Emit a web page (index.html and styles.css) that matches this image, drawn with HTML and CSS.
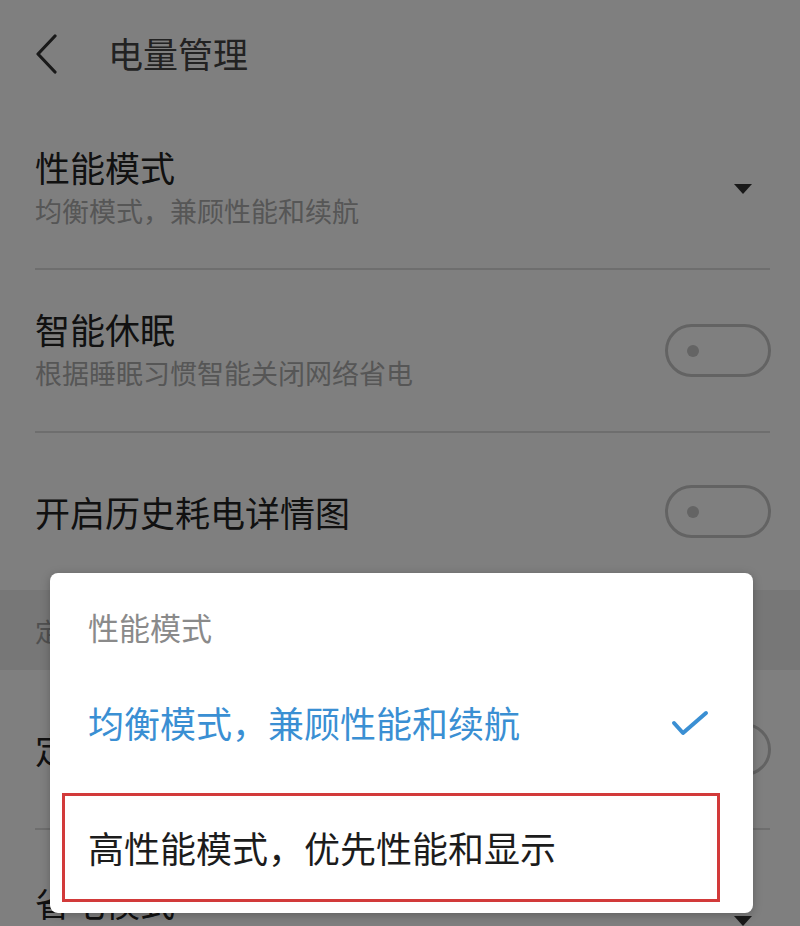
FILE: index.html
```html
<!DOCTYPE html>
<html lang="zh-CN">
<head>
<meta charset="utf-8">
<title>电量管理</title>
<link rel="stylesheet" href="styles.css">
</head>
<body>
<div class="page">
  <div class="header">
    <svg class="back" width="24" height="40" viewBox="0 0 24 40"><polyline points="20,2 3,20 20,38" fill="none" stroke="#333" stroke-width="3.2" stroke-linecap="round" stroke-linejoin="round"/></svg>
    <div class="h-title">电量管理</div>
  </div>
  <div class="list">
    <div class="row row1">
      <div class="txt">
        <div class="t">性能模式</div>
        <div class="s">均衡模式，兼顾性能和续航</div>
      </div>
      <span class="tri"></span>
    </div>
    <div class="row row2">
      <div class="txt">
        <div class="t">智能休眠</div>
        <div class="s">根据睡眠习惯智能关闭网络省电</div>
      </div>
      <span class="toggle"><span class="dot"></span></span>
    </div>
    <div class="row row3 nob">
      <div class="txt">
        <div class="t">开启历史耗电详情图</div>
      </div>
      <span class="toggle"><span class="dot"></span></span>
    </div>
  </div>
  <div class="section">定时设置</div>
  <div class="list">
    <div class="row row4">
      <div class="txt">
        <div class="t">定时开关机</div>
      </div>
      <span class="toggle"><span class="dot"></span></span>
    </div>
    <div class="row row5 nob">
      <div class="txt">
        <div class="t">省电模式</div>
      </div>
      <span class="tri tri5"></span>
    </div>
  </div>
</div>
<div class="overlay"></div>
<div class="dialog">
  <div class="d-title">性能模式</div>
  <div class="opt opt-sel">
    <span>均衡模式，兼顾性能和续航</span>
    <svg class="check" width="38" height="28" viewBox="0 0 38 28"><polyline points="3,13 12,23 35,3" fill="none" stroke="#3a8fd3" stroke-width="4" stroke-linecap="round" stroke-linejoin="round"/></svg>
  </div>
  <div class="opt opt-hl">
    <span>高性能模式，优先性能和显示</span>
  </div>
</div>
</body>
</html>
```

FILE: styles.css
```css
html, body {
  margin: 0;
  padding: 0;
}
body {
  width: 800px;
  height: 926px;
  overflow: hidden;
  position: relative;
  background: #fff;
  font-family: "Noto Sans CJK SC", "Noto Sans", sans-serif;
  color: #333;
}
.page {
  background: #fff;
}
.header {
  height: 105px;
  display: flex;
  align-items: center;
  padding-left: 35px;
}
.back {
  display: block;
  margin-top: 2px;
}
.h-title {
  margin-left: 49px;
  font-size: 35px;
  line-height: 40px;
  color: #444;
}
.list {
  padding: 0 30px 0 35px;
}
.row {
  display: flex;
  align-items: center;
  justify-content: space-between;
  border-bottom: 2px solid #ddd;
  box-sizing: border-box;
}
.row.nob {
  border-bottom: none;
}
.row1 { height: 165px; padding-top: 4px; }
.row2 { height: 163px; }
.row3 { height: 157px; }
.row4 { height: 160px; }
.row5 { height: 120px; align-items: flex-start; padding-top: 50px; }
.t {
  font-size: 35px;
  line-height: 44px;
  color: #222;
}
.s {
  font-size: 27px;
  line-height: 44px;
  color: #acacac;
}
.tri {
  width: 0;
  height: 0;
  border-left: 9px solid transparent;
  border-right: 9px solid transparent;
  border-top: 10px solid #333;
  margin-right: 18px;
}
.tri5 {
  margin-top: 36px;
}
.toggle {
  width: 106px;
  height: 53px;
  box-sizing: border-box;
  border: 3px solid #c6c6c6;
  border-radius: 27px;
  display: flex;
  align-items: center;
  padding-left: 19px;
  margin-right: -1px;
}
.dot {
  width: 12px;
  height: 12px;
  border-radius: 50%;
  background: #c8c8c8;
}
.section {
  height: 80px;
  background: #eeeeee;
  display: flex;
  align-items: center;
  padding-left: 35px;
  font-size: 26px;
  color: #a0a0a0;
}
.overlay {
  position: absolute;
  inset: 0;
  background: rgba(0, 0, 0, 0.5);
}
.dialog {
  position: absolute;
  left: 50px;
  top: 573px;
  width: 703px;
  height: 340px;
  background: #fff;
  border-radius: 8px;
  box-shadow: 0 2px 10px rgba(0, 0, 0, 0.25);
  box-sizing: border-box;
  padding-top: 36px;
}
.d-title {
  padding-left: 38px;
  font-size: 31px;
  line-height: 36px;
  color: #8a8a8a;
  margin-bottom: 22px;
}
.opt {
  display: flex;
  align-items: center;
  justify-content: space-between;
  font-size: 36px;
  box-sizing: border-box;
}
.opt-sel {
  height: 110px;
  padding: 0 44px 0 38px;
  color: #3a8fd3;
  margin-bottom: 16px;
}
.check {
  display: block;
  margin-top: 4px;
}
.opt-hl {
  height: 109px;
  margin: 0 33px 0 12px;
  border: 3px solid #d23a3a;
  padding-left: 23px;
  padding-bottom: 2px;
  color: #1c1c1c;
}
```
